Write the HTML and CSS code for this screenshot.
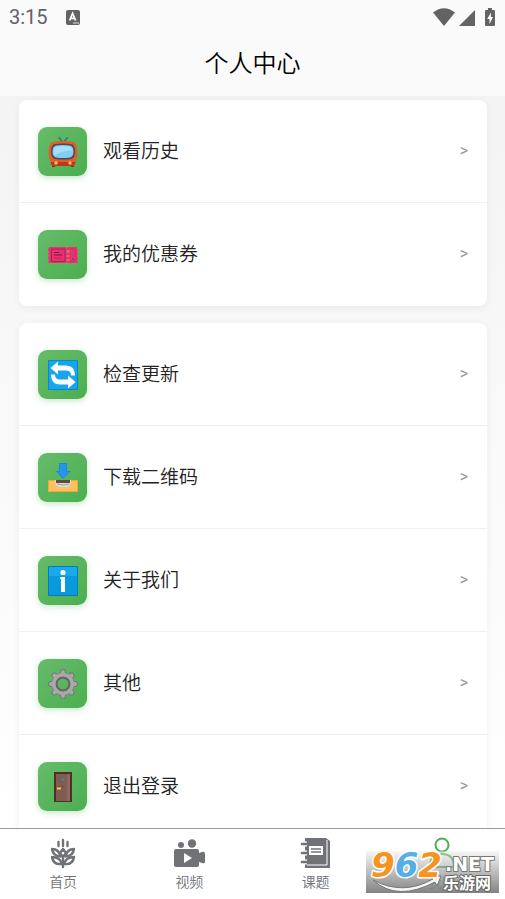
FILE: index.html
```html
<!DOCTYPE html>
<html lang="zh-CN">
<head>
  <meta charset="UTF-8" />
  <meta name="viewport" content="width=device-width, initial-scale=1.0" />
  <title>个人中心</title>
  <link rel="stylesheet" href="styles.css">
</head>
<body>

  <header class="header">
    <div class="status">
      <span class="time">3:15</span>
      <svg class="status-app" viewBox="0 0 14 15">
        <rect width="14" height="15" rx="2" fill="#636363"/>
        <path d="M3.6 10.5 6.6 3.5l3 7M4.7 8.3h3.8" fill="none" stroke="#fff" stroke-width="1.8"/>
        <path d="M7 13h6" stroke="#ddd" stroke-width="1"/>
      </svg>
      <div class="status-right">
        <svg class="wifi" viewBox="0 0 22 18"><path d="M0 4.6Q11-4 22 4.6L11 18z"/></svg>
        <svg class="signal" viewBox="0 0 16 16"><path d="M16 0v16H0z"/></svg>
        <svg class="battery" viewBox="0 0 10 18">
          <path d="M3 0h4v2h2a1 1 0 0 1 1 1v14a1 1 0 0 1-1 1H1a1 1 0 0 1-1-1V3a1 1 0 0 1 1-1h2z"/>
          <path d="M6 4.5 2.2 11h2.3v5L8 9H5.8z" fill="#fff"/>
        </svg>
      </div>
    </div>
    <h1>个人中心</h1>
  </header>

  <main class="content">
    <ul class="card">
      <li><a class="row" href="#history">
        <span class="icon">
          <svg viewBox="0 0 30 30">
            <path d="M15 6 11.5 1M15 6l4-5" stroke="#287b89" stroke-width="1.4" fill="none"/>
            <circle cx="11.5" cy="1.2" r="1" fill="#287b89"/><circle cx="19" cy="1.2" r="1" fill="#287b89"/>
            <path d="M11 6q4-3 8 0z" fill="#9c3c20"/>
            <path d="M4 27h4l-1 3H4zM22 27h4v3h-3z" fill="#8e321d"/>
            <path d="M5 5q10-2 20 0 3 1 4 5 1 6 0 10l-2 7q-1 2-4 2H7q-3 0-4-2l-2-7q-1-5 0-10 1-4 4-5z" fill="#e65b2c"/>
            <path d="M2.5 25h25l-1 3q-2 1-4 1h-15q-3 0-4-1z" fill="#b83a20"/>
            <path d="M7 7q8-1 16 0 4 1 4 7.500T23 22q-8 1-16 0-4-1-4-7.500T7 7z" fill="#494b50"/>
            <path d="M8 8.500q7-1 14 0 3.500 1 3.500 6T22 20.500q-7 1-14 0-3.500-1-3.500-6t3.500-6z" fill="#82cdf3"/>
            <path d="M9 9.500q6-1 12 0 3 1 3 4-10 0-18 5-2-7 3-9z" fill="#a9dff9"/>
            <circle cx="8" cy="26" r="1.700" fill="#ffc247"/><circle cx="22" cy="26" r="1.700" fill="#ffc247"/>
          </svg>
        </span>
        <span class="label">观看历史</span><span class="arrow">&gt;</span>
      </a></li>
      <li><a class="row" href="#coupons">
        <span class="icon">
          <svg viewBox="0 0 30 30">
            <path d="M1 7h17l1 1 1-1h9v2l1 1-1 2 1 2-1 2 1 2-1 2 1 2-1 1H20l-1-1-1 1H1l-1-1 1-2-1-2 1-2-1-2 1-2-1-2z" fill="#ed2e70"/>
            <path d="M3.500 9H17v12.500H3.500z" fill="none" stroke="#a91f5b"/>
            <path d="M6 12.500h5M6 15h8" stroke="#6f1f46" stroke-width="1.200"/>
            <path d="M6 18h8" stroke="#c41f5e"/>
            <path d="M22 9h5v12h-5" fill="none" stroke="#dc2a69"/>
            <path d="M18.500 10h3v3h-3zM18.500 15h3v2h-3zM18.500 19h3v2h-3z" fill="#b58169"/>
            <path d="m24 18 2 2" stroke="#8d2452"/>
          </svg>
        </span>
        <span class="label">我的优惠券</span><span class="arrow">&gt;</span>
      </a></li>
    </ul>

    <ul class="card">
      <li><a class="row" href="#update">
        <span class="icon">
          <svg viewBox="0 0 30 30">
            <rect width="30" height="30" rx="1" fill="#0b87d2"/><rect x="1" y="1" width="28" height="28" rx="1" fill="#16a5ef"/>
            <path d="M10 1.500v4h8q9 0 9 10h-4q0-5-5-5h-8v4L2.500 8z" fill="#fff"/>
            <path d="M20 28.500v-4h-8q-9 0-9-10h4q0 5 5 5h8v-4l7.500 6.500z" fill="#fff"/>
          </svg>
        </span>
        <span class="label">检查更新</span><span class="arrow">&gt;</span>
      </a></li>
      <li><a class="row" href="#qrcode">
        <span class="icon">
          <svg viewBox="0 0 30 30">
            <path d="M11 0h8v8h4l-8 8-7-8h3z" fill="#2383df"/><path d="M12 1h6v8h3l-6 6-5-6h2z" fill="#2694f4"/>
            <path d="M0 17h30v12H0z" fill="#f4a638"/><path d="M1 18h28v10H1z" fill="#ffc064"/>
            <path d="M7 17h16q0 7-5 7h-6q-5 0-5-7z" fill="#ddd"/>
            <path d="M8 17h14v3H8z" fill="#66483e"/><path d="M9 21q6 2 12 0" fill="none" stroke="#999"/>
          </svg>
        </span>
        <span class="label">下载二维码</span><span class="arrow">&gt;</span>
      </a></li>
      <li><a class="row" href="#about">
        <span class="icon">
          <svg viewBox="0 0 30 30">
            <rect width="30" height="30" rx="1" fill="#0879be"/><rect x="1" y="1" width="28" height="28" rx="1" fill="#099add"/>
            <path d="M1 1h28v9H1z" fill="#18aaeb"/>
            <circle cx="15" cy="6.500" r="2.600" fill="#fff"/><path d="M12 11h5v15h-4V13h-1z" fill="#fff"/>
          </svg>
        </span>
        <span class="label">关于我们</span><span class="arrow">&gt;</span>
      </a></li>
      <li><a class="row" href="#other">
        <span class="icon">
          <svg viewBox="0 0 30 30">
            <g fill="none" stroke="#777" stroke-width="6" stroke-linecap="round">
              <path d="M15 3v3M15 24v3M3 15h3M24 15h3M6.500 6.500l2 2M21.500 21.500l2 2M6.500 23.500l2-2M21.500 8.500l2-2"/>
              <circle cx="15" cy="15" r="8.500"/>
            </g>
            <g fill="none" stroke="#a9a9a9" stroke-width="4" stroke-linecap="round">
              <path d="M15 3v3M15 24v3M3 15h3M24 15h3M6.500 6.500l2 2M21.500 21.500l2 2M6.500 23.500l2-2M21.500 8.500l2-2"/>
              <circle cx="15" cy="15" r="9"/>
            </g>
            <circle cx="15" cy="15" r="6.500" fill="none" stroke="#666" stroke-width="2"/>
          </svg>
        </span>
        <span class="label">其他</span><span class="arrow">&gt;</span>
      </a></li>
      <li><a class="row" href="#logout">
        <span class="icon">
          <svg viewBox="0 0 30 30">
            <path d="M6 0h18v30H6z" fill="#4d3028"/><path d="M8 2h14v27H8z" fill="#805b50"/>
            <path d="M19 2h3v27h-3z" fill="#8f685b"/>
            <circle cx="15" cy="7.500" r="1.500" fill="#4a81a5"/>
            <path d="M9 15.500h4v2H9z" fill="#ffc73c"/><path d="M14 14.500h1" stroke="#513228"/>
          </svg>
        </span>
        <span class="label">退出登录</span><span class="arrow">&gt;</span>
      </a></li>
    </ul>
  </main>

  <nav class="tabbar">
    <a class="tab" href="#home">
      <svg viewBox="0 0 32 32">
        <g fill="none" stroke="currentColor" stroke-width="2.400" stroke-linecap="round" stroke-linejoin="round">
          <path d="M16 3v6M11.500 5v4M20.500 5v4M16 19v11"/>
          <path d="m16 12-3 4 3 4 3-4z"/>
          <path d="M5 12q7 0 8.500 7.500Q6 19 5 12zM27 12q-7 0-8.500 7.500Q26 19 27 12z"/>
          <path d="M5 20q8 0 10 7Q6 28 5 20zM27 20q-8 0-10 7 9 1 10-7z"/>
        </g>
      </svg>
      <span>首页</span>
    </a>
    <a class="tab" href="#video">
      <svg viewBox="0 0 32 32" fill="currentColor">
        <circle cx="8" cy="8" r="3"/><circle cx="19" cy="6.500" r="4.200"/>
        <path d="M3 12h21q2 0 2 2v2l3-1q3-1 3 2v8q0 2-3 1l-3-1v3q0 2-2 2H3q-2 0-2-2V14q0-2 2-2z"/>
        <path d="m11 16 8 5-8 5z" fill="#fff"/>
      </svg>
      <span>视频</span>
    </a>
    <a class="tab" href="#topics">
      <svg viewBox="0 0 32 32">
        <path d="M5 1h21l4 3v27H5z" fill="currentColor"/>
        <path d="M27 3v25H7" fill="none" stroke="#fff" stroke-width="1"/>
        <path d="M1 7h6M1 16h6M1 25h6" stroke="#fff" stroke-width="5"/>
        <path d="M2 7h5M2 16h5M2 25h5" stroke="currentColor" stroke-width="2.600" stroke-linecap="round"/>
        <path d="M9 9h14v9H9z" fill="#fff"/><path d="M11 12h10M11 15h10" stroke="currentColor" stroke-width="1.500"/>
      </svg>
      <span>课题</span>
    </a>
    <a class="tab active" href="#me">
      <svg viewBox="0 0 32 32" fill="none" stroke="currentColor" stroke-width="2">
        <circle cx="16" cy="8" r="6.500"/><path d="M4 30q0-13 12-13t12 13z"/>
      </svg>
      <span>我的</span>
    </a>
  </nav>

  <div class="watermark">
    <svg viewBox="0 0 133 42">
      <path d="M7 29q30 16 60-1l-3-2 11-1-4 10-2-4Q31 51 7 29z" fill="#f4f4f4" stroke="#777" stroke-width="1"/>
      <text class="wm-number" x="5" y="26"><tspan fill="#f79420">9</tspan><tspan fill="#55afe6">6</tspan><tspan fill="#f79420">2</tspan></text>
      <text class="wm-net" x="79" y="20">.NET</text>
      <text class="wm-name" x="77" y="38">乐游网</text>
    </svg>
  </div>

</body>
</html>
```

FILE: styles.css
```css
:root {
  --gray: #707278;
  --status: #636363;
  --green: #4caf50;
  --text: #222;
}

* {
  box-sizing: border-box;
}

body {
  margin: 0;
  height: 100vh;
  display: flex;
  flex-direction: column;
  position: relative;
  overflow: hidden;
  background: #fff;
  color: var(--text);
  font-family: "Noto Sans CJK SC", sans-serif;
}

a {
  color: inherit;
  text-decoration: none;
}

svg {
  display: block;
}

/* header */
.header {
  background: #fafafa;
  padding-bottom: 16px;
}

.status {
  display: flex;
  align-items: center;
  height: 34px;
  padding: 0 10px 0 9px;
  color: var(--status);
}

.time {
  font-family: Roboto, sans-serif;
  font-size: 20px;
  line-height: 24px;
}

.status-app {
  width: 14px;
  height: 15px;
  margin-left: 18px;
}

.status-right {
  display: flex;
  align-items: flex-end;
  margin-left: auto;
  fill: var(--status);
}

.wifi { width: 22px; height: 18px; }
.signal { width: 16px; height: 16px; margin: 0 10px 0 4px; }
.battery { width: 10px; height: 18px; }

.header h1 {
  margin: 0;
  padding-top: 10px;
  font-size: 24px;
  font-weight: 350;
  line-height: 36px;
  text-align: center;
  color: #000;
}

/* menu */
.content {
  flex: 1;
  min-height: 0;
  overflow-y: auto;
  scrollbar-width: none;
  padding: 4px 18px 0 19px;
  background: linear-gradient(#f4f4f4, #fff);
}

.content::-webkit-scrollbar { display: none; }

.card {
  list-style: none;
  margin: 0 0 17px;
  padding: 0;
  border-radius: 8px;
  background: #fff;
  box-shadow: 0 2px 8px rgba(0, 0, 0, 0.06);
}

.card li { border-bottom: 1px solid #f0f0f0; }
.card li:last-child { border-bottom-color: transparent; }

.row {
  display: flex;
  align-items: center;
  padding: 27px 19px 26px;
}

.icon {
  display: flex;
  align-items: center;
  justify-content: center;
  width: 49px;
  height: 49px;
  margin-right: 16px;
  border-radius: 9px;
  background: linear-gradient(135deg, #66bb6a, var(--green));
  box-shadow: 0 2px 6px rgba(76, 175, 80, 0.3);
}

.icon svg {
  width: 30px;
  height: 30px;
}

.label {
  flex: 1;
  padding-bottom: 4px;
  font-size: 19px;
  font-weight: 350;
  line-height: 28px;
}

.arrow {
  padding-bottom: 2px;
  font-family: Roboto, sans-serif;
  font-size: 16px;
  color: #999;
}

/* bottom tabs */
.tabbar {
  display: flex;
  height: 71px;
  padding-top: 8px;
  border-top: 1px solid #999;
  background: #fff;
}

.tab {
  flex: 1;
  display: flex;
  flex-direction: column;
  align-items: center;
  gap: 2px;
  color: var(--gray);
  font-size: 14px;
  font-weight: 350;
  line-height: 20px;
}

.tab svg {
  width: 32px;
  height: 32px;
}

.tab.active { color: var(--green); }

/* site logo laid over the corner */
.watermark {
  position: absolute;
  right: 6px;
  bottom: 6px;
  width: 133px;
  height: 42px;
  background: linear-gradient(rgba(235, 235, 235, 0.4), rgba(125, 125, 125, 0.95));
  pointer-events: none;
}

.watermark svg { overflow: visible; }

.watermark text {
  font-weight: 700;
  paint-order: stroke;
  stroke-linejoin: round;
}

.wm-number {
  font-family: "DejaVu Sans", sans-serif;
  font-size: 34px;
  font-style: italic;
  stroke: #fff;
  stroke-width: 3px;
}

.wm-net {
  font-family: "DejaVu Sans", sans-serif;
  font-size: 19px;
  fill: #fff;
  stroke: #777;
  stroke-width: 2px;
}

.wm-name {
  font-family: "Noto Sans CJK SC", sans-serif;
  font-size: 16px;
  fill: #fff;
  stroke: #666;
  stroke-width: 2px;
}
```
